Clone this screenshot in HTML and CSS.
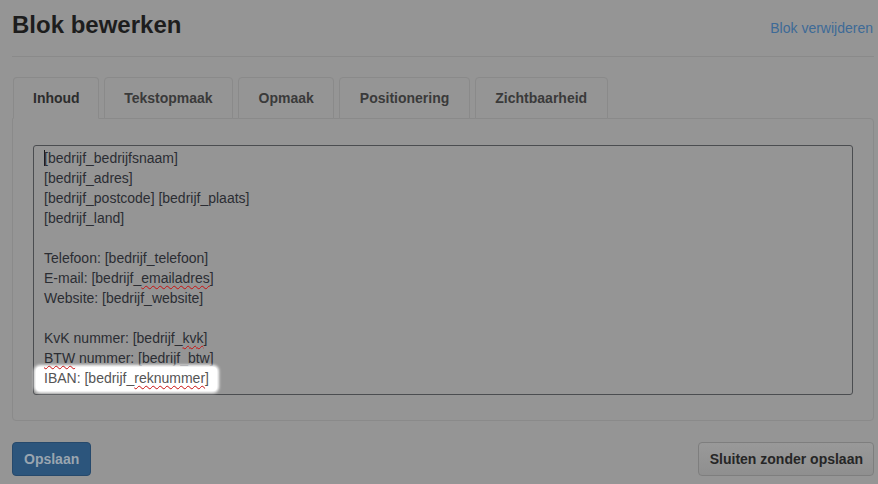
FILE: index.html
```html
<!DOCTYPE html>
<html lang="nl">
<head>
<meta charset="utf-8">
<title>Blok bewerken</title>
<link rel="stylesheet" href="styles.css">
</head>
<body>
<div class="page">
  <div class="header">
    <h3 class="title">Blok bewerken</h3>
    <a class="delete-link" href="#">Blok verwijderen</a>
  </div>

  <ul class="tabs">
    <li class="tab active">Inhoud</li>
    <li class="tab">Tekstopmaak</li>
    <li class="tab">Opmaak</li>
    <li class="tab">Positionering</li>
    <li class="tab">Zichtbaarheid</li>
  </ul>

  <div class="panel">
    <div class="editor">
      <div class="line"><span class="caret"></span>[bedrijf_bedrijfsnaam]</div>
      <div class="line">[bedrijf_adres]</div>
      <div class="line">[bedrijf_postcode] [bedrijf_plaats]</div>
      <div class="line">[bedrijf_land]</div>
      <div class="line">&nbsp;</div>
      <div class="line">Telefoon: [bedrijf_telefoon]</div>
      <div class="line">E-mail: [bedrijf_<span class="misspelled">emailadres</span>]</div>
      <div class="line">Website: [bedrijf_website]</div>
      <div class="line">&nbsp;</div>
      <div class="line">KvK nummer: [bedrijf_<span class="misspelled">kvk</span>]</div>
      <div class="line"><span class="misspelled">BTW</span> nummer: [bedrijf_btw]</div>
      <div class="line"><span class="highlight">IBAN: [bedrijf_<span class="misspelled">reknummer</span>]</span></div>
    </div>
  </div>

  <div class="actions">
    <button class="btn btn-primary">Opslaan</button>
    <button class="btn btn-default">Sluiten zonder opslaan</button>
  </div>
</div>
</body>
</html>
```

FILE: styles.css
```css
html, body {
  margin: 0;
  padding: 0;
  background: #959595;
  font-family: "Liberation Sans", Arial, sans-serif;
  font-size: 14px;
  color: #1e1e1e;
}

.page {
  padding: 0 4px 0 12px;
}

.header {
  display: flex;
  justify-content: space-between;
  align-items: baseline;
  padding-top: 12px;
  padding-bottom: 18px;
  border-bottom: 1px solid #8a8a8a;
}

.title {
  margin: 0;
  font-size: 24px;
  line-height: 26px;
  font-weight: bold;
  color: #1d1d1d;
}

.delete-link {
  font-size: 14px;
  line-height: 20px;
  color: #3d6a97;
  text-decoration: none;
  margin-right: 1px;
}

.tabs {
  list-style: none;
  margin: 20px 0 -1px 0;
  padding: 0 0 0 1px;
  display: flex;
  gap: 5px;
  position: relative;
  z-index: 1;
}

.tab {
  padding: 10px 19.5px;
  line-height: 20px;
  font-weight: bold;
  color: #3a3a3a;
  border: 1px solid #8a8a8a;
  border-radius: 4px 4px 0 0;
  background: #959595;
}

.tab.active {
  padding: 10px 18px 10px 19px;
  color: #2c2c2c;
  border-bottom-color: #959595;
}

.panel {
  border: 1px solid #8a8a8a;
  border-radius: 0 4px 4px 4px;
  padding: 26px 20px 25px 20px;
}

.editor {
  border: 1px solid #4b4d50;
  border-radius: 3px;
  height: 240px;
  padding: 2px 10px 6px 10px;
  box-sizing: content-box;
  color: #2b2d33;
  line-height: 20px;
  font-size: 14px;
}

.line {
  height: 20px;
  white-space: nowrap;
}

.caret {
  display: inline-block;
  width: 0;
  height: 16px;
  border-left: 1px solid #1c1c1c;
  vertical-align: -3px;
  margin-right: -1px;
}

.misspelled {
  position: relative;
  text-decoration: underline wavy #c81010;
  text-decoration-thickness: 1px;
  text-underline-offset: 2px;
  text-decoration-skip-ink: none;
}

.highlight {
  display: inline-block;
  background: #fff;
  color: #555;
  padding: 1px 8px 3px 8px;
  margin: -1px 0 -3px -8px;
  border-radius: 4px;
  box-shadow: 0 0 3px 2px #fff;
}

.actions {
  display: flex;
  justify-content: space-between;
  margin-top: 21px;
}

.btn {
  font-family: "Liberation Sans", Arial, sans-serif;
  font-size: 14px;
  font-weight: bold;
  line-height: 20px;
  padding: 6px 11px;
  border-radius: 4px;
  margin: 0;
}

.btn-primary {
  background: #2c557c;
  border: 1px solid #26496c;
  color: #9aa5b0;
}

.btn-default {
  background: linear-gradient(#999999, #8f8f8f);
  border: 1px solid #7e7e7e;
  color: #262626;
  padding: 6px 10px 6px 11px;
}
```
